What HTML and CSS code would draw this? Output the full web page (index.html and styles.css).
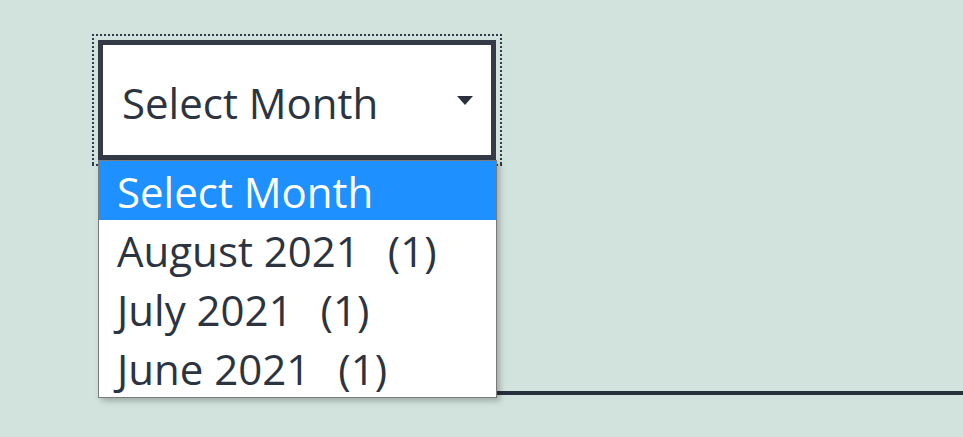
FILE: index.html
```html
<!DOCTYPE html>
<html lang="en">
<head>
  <meta charset="UTF-8" />
  <meta name="viewport" content="width=device-width, initial-scale=1.0" />
  <title>Archives</title>
  <link rel="stylesheet" href="styles.css">
</head>
<body>
  <div class="widget">
    <div class="select-wrap">
      <div class="focus-ring">
        <div class="select">
          <span class="select-label">Select Month</span>
          <span class="caret"></span>
        </div>
      </div>
      <ul class="dropdown">
        <li class="active">Select Month</li>
        <li>August 2021 <span class="count">(1)</span></li>
        <li>July 2021 <span class="count">(1)</span></li>
        <li>June 2021 <span class="count">(1)</span></li>
      </ul>
    </div>
    <div class="divider"></div>
  </div>
</body>
</html>
```

FILE: styles.css
```css
html, body {
  min-height: 100%;
}
body {
  margin: 0;
  background: #d2e3dd;
  font-family: "Open Sans", "Noto Sans", sans-serif;
  color: #2b3440;
}
.widget {
  padding: 34px 0 42px 92px;
}
.select-wrap {
  position: relative;
  width: 410px;
}
/* square-dotted focus ring, like the native one */
.focus-ring {
  padding: 6px;
  background:
    repeating-linear-gradient(90deg, #343a46 0 2px, transparent 2px 4px) left top / 100% 2px no-repeat,
    repeating-linear-gradient(90deg, #343a46 0 2px, transparent 2px 4px) left bottom / 100% 2px no-repeat,
    repeating-linear-gradient(180deg, #343a46 0 2px, transparent 2px 4px) left top / 2px 100% no-repeat,
    repeating-linear-gradient(180deg, #343a46 0 2px, transparent 2px 4px) right top / 2px 100% no-repeat;
}
.select {
  box-sizing: border-box;
  height: 120px;
  border: 5px solid #343a46;
  background: #fff;
  display: flex;
  align-items: center;
  justify-content: space-between;
  padding: 4px 18px 0 19px;
  font-size: 42px;
}
.caret {
  width: 0;
  height: 0;
  border-left: 8.5px solid transparent;
  border-right: 8.5px solid transparent;
  border-top: 9px solid #2b303a;
  margin-top: -4px;
}
.dropdown {
  position: absolute;
  top: 126px;
  left: 6px;
  width: 399px;
  box-sizing: border-box;
  margin: 0;
  padding: 0;
  list-style: none;
  background: #fff;
  border: 1px solid #7a7a7a;
  box-shadow: 3px 3px 6px rgba(0, 0, 0, 0.25);
  font-size: 42px;
  z-index: 2;
}
.dropdown li {
  height: 59px;
  line-height: 59px;
  padding: 1px 0 0 18px;
  box-sizing: border-box;
  white-space: nowrap;
}
.dropdown li.active {
  background: #1e90ff;
  color: #fff;
}
.count {
  margin-left: 17px;
}
.divider {
  margin: 225px 0 0 6px;
  border-top: 4px solid #28323d;
}
```
